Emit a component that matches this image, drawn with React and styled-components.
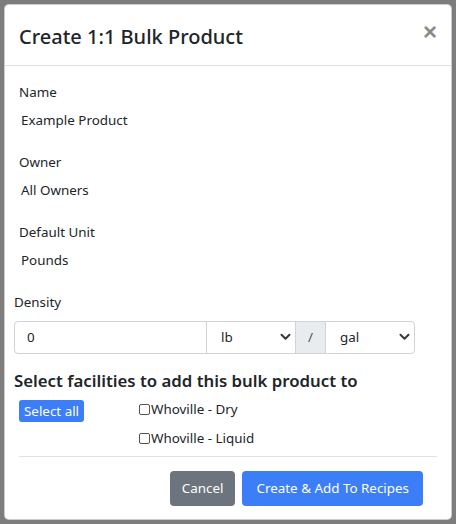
import React, { useState } from "react";
import styled, { createGlobalStyle } from "styled-components";

const textColour = "#212529";
const borderColour = "#ced4da";
const primaryColour = "#3b7ef7";
const secondaryColour = "#6c757d";

const GlobalStyle = createGlobalStyle`
    html, body {
        margin: 0;
        padding: 0;
    }
    body {
        font-family: "Noto Sans", "Open Sans", sans-serif;
        color: ${textColour};
        background: #7d7d7d;
    }
    * {
        box-sizing: border-box;
    }
`;

const Backdrop = styled.div`
    width: 456px;
    height: 524px;
    padding: 4px;
    background: #7d7d7d;
    overflow: hidden;
`;

const Dialog = styled.div`
    width: 448px;
    height: 516px;
    background: #fff;
    border: 1px solid rgba(0, 0, 0, 0.2);
    border-radius: 5px;
    display: flex;
    flex-direction: column;
`;

const Header = styled.div`
    flex-shrink: 0;
    height: 61px;
    padding: 0 14px 0 14px;
    display: flex;
    align-items: center;
    justify-content: space-between;
    border-bottom: 1px solid #dee2e6;
`;

const Title = styled.h5`
    margin: 0;
    font-size: 20px;
    font-weight: 500;
    line-height: 1.2;
    padding-top: 4px;
`;

const CloseBtn = styled.button`
    border: none;
    background: none;
    padding: 0;
    margin-top: -6px;
    font-family: "Liberation Sans", sans-serif;
    font-size: 24px;
    font-weight: 700;
    line-height: 1;
    color: #8a8a8a;
    cursor: pointer;
`;

const Body = styled.div`
    padding: 16px 9px 0;
    flex: 1;
`;

const Field = styled.div`
    padding-left: ${(props) => (props.inset ? "5px" : "0")};
    margin-bottom: ${(props) => (props.last ? 0 : 21)}px;
`;

const Label = styled.div`
    font-size: 13.4px;
    line-height: 21px;
    margin-bottom: ${(props) => props.gap || 7}px;
`;

const Value = styled.div`
    font-size: 13.4px;
    line-height: 21px;
    padding-left: 2px;
`;

const InputGroup = styled.div`
    display: flex;
    width: 401px;
    height: 33px;
`;

const TextInput = styled.input`
    width: 193px;
    height: 33px;
    border: 1px solid ${borderColour};
    border-radius: 4px 0 0 4px;
    padding: 0 12px;
    font-family: inherit;
    font-size: 13.4px;
    color: ${textColour};
    outline: none;
`;

const SelectWrap = styled.div`
    position: relative;
    width: ${(props) => props.width}px;
    height: 33px;
    margin-left: -1px;

    svg {
        position: absolute;
        right: 5px;
        top: 12px;
        pointer-events: none;
    }
`;

const Select = styled.select`
    appearance: none;
    width: 100%;
    height: 100%;
    border: 1px solid ${borderColour};
    border-radius: ${(props) => (props.last ? "0 4px 4px 0" : "0")};
    background: #fff;
    padding: 0 12px 0 14px;
    font-family: inherit;
    font-size: 13.4px;
    color: ${textColour};
    outline: none;
`;

const Addon = styled.span`
    width: 31px;
    margin-left: -1px;
    display: flex;
    align-items: center;
    justify-content: center;
    background: #e9ecef;
    border: 1px solid ${borderColour};
    font-size: 13.4px;
    color: #495057;
`;

const SectionTitle = styled.h3`
    margin: 15px 0 7px;
    font-size: 16.8px;
    font-weight: 600;
    line-height: 24px;
`;

const Facilities = styled.div`
    display: grid;
    grid-template-columns: 120px 1fr;
    padding-bottom: 7px;
    border-bottom: 1px solid #dee2e6;
    margin: 0 5px;
`;

const SmallButton = styled.button`
    align-self: start;
    justify-self: start;
    height: 22px;
    padding: 0 5px;
    border: none;
    border-radius: 3px;
    background: ${primaryColour};
    color: #fff;
    font-family: inherit;
    font-size: 13.4px;
    line-height: 22px;
`;

const CheckList = styled.div`
    display: flex;
    flex-direction: column;
    gap: 8px;
    margin-top: -1px;
`;

const CheckRow = styled.label`
    display: flex;
    align-items: center;
    font-size: 13.4px;
    line-height: 21px;
`;

const Check = styled.input`
    appearance: none;
    width: 11px;
    height: 11px;
    margin: 0 1px 0 0;
    border: 1px solid #555;
    border-radius: 2px;
    background: #fff;

    &:checked {
        background: ${primaryColour};
        border-color: ${primaryColour};
    }
`;

const Footer = styled.div`
    flex-shrink: 0;
    display: flex;
    justify-content: flex-end;
    gap: 7px;
    padding: 14px 28px 14px 0;
`;

const Button = styled.button`
    height: 35px;
    padding: 0 ${(props) => (props.variant === "secondary" ? 12 : 14)}px;
    border: none;
    border-radius: 4px;
    background: ${(props) =>
        props.variant === "secondary" ? secondaryColour : primaryColour};
    color: #fff;
    font-family: inherit;
    font-size: 13.4px;
    cursor: pointer;
`;

const Chevron = () => (
    <svg width="11" height="8" viewBox="0 0 11 8">
        <path
            d="M1.5 1.8 L5.5 5.8 L9.5 1.8"
            fill="none"
            stroke="#343a40"
            strokeWidth="2"
            strokeLinecap="round"
            strokeLinejoin="round"
        />
    </svg>
);

const facilities = ["Whoville - Dry", "Whoville - Liquid"];

const App = () => {
    const [checked, setChecked] = useState({});

    return (
        <Backdrop>
            <GlobalStyle />
            <Dialog>
                <Header>
                    <Title>Create 1:1 Bulk Product</Title>
                    <CloseBtn>×</CloseBtn>
                </Header>
                <Body>
                    <Field inset>
                        <Label>Name</Label>
                        <Value>Example Product</Value>
                    </Field>
                    <Field inset>
                        <Label>Owner</Label>
                        <Value>All Owners</Value>
                    </Field>
                    <Field inset>
                        <Label>Default Unit</Label>
                        <Value>Pounds</Value>
                    </Field>
                    <Field last>
                        <Label gap={7.5}>Density</Label>
                        <InputGroup>
                            <TextInput defaultValue="0" />
                            <SelectWrap width={90}>
                                <Select defaultValue="lb">
                                    <option value="lb">lb</option>
                                    <option value="kg">kg</option>
                                </Select>
                                <Chevron />
                            </SelectWrap>
                            <Addon>/</Addon>
                            <SelectWrap width={90}>
                                <Select last defaultValue="gal">
                                    <option value="gal">gal</option>
                                    <option value="l">L</option>
                                </Select>
                                <Chevron />
                            </SelectWrap>
                        </InputGroup>
                    </Field>
                    <SectionTitle>
                        Select facilities to add this bulk product to
                    </SectionTitle>
                    <Facilities>
                        <SmallButton
                            onClick={() =>
                                setChecked({ 0: true, 1: true })
                            }
                        >
                            Select all
                        </SmallButton>
                        <CheckList>
                            {facilities.map((name, i) => (
                                <CheckRow key={name}>
                                    <Check
                                        type="checkbox"
                                        checked={!!checked[i]}
                                        onChange={() =>
                                            setChecked({
                                                ...checked,
                                                [i]: !checked[i],
                                            })
                                        }
                                    />
                                    {name}
                                </CheckRow>
                            ))}
                        </CheckList>
                    </Facilities>
                </Body>
                <Footer>
                    <Button variant="secondary">Cancel</Button>
                    <Button>Create &amp; Add To Recipes</Button>
                </Footer>
            </Dialog>
        </Backdrop>
    );
};

export default App;
